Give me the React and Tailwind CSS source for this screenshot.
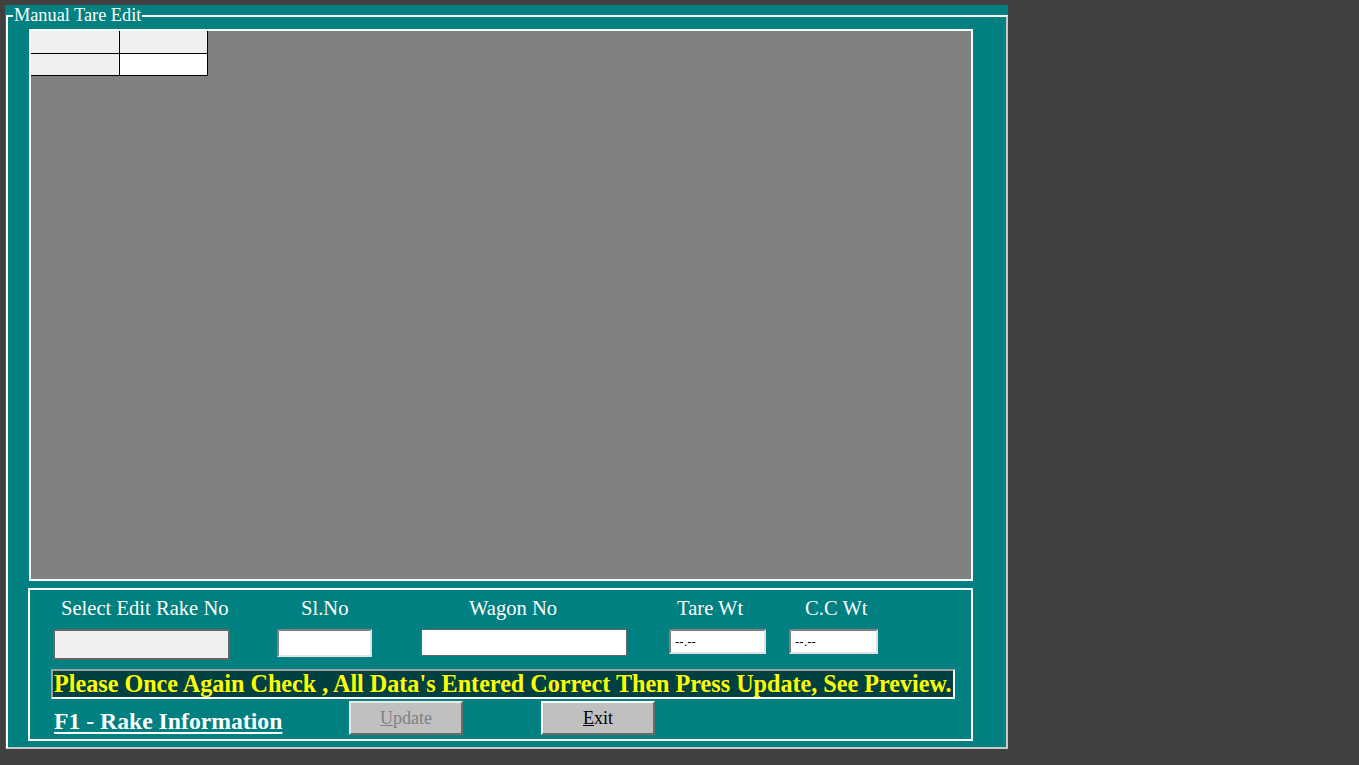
export default function App() {
  const serif = { fontFamily: '"Liberation Serif", "Times New Roman", serif' };
  return (
    <div className="w-[1359px] h-[765px] bg-[#404040] pt-[5px] pl-[5px] overflow-hidden" style={serif}>
      <div className="w-[1003px] h-[744px] bg-[#008080]">
        <fieldset className="ml-[1px] w-[1002px] h-[744px] border-t-2 border-l-2 border-white border-r-2 border-b-2 border-r-[#c8c8c8] border-b-[#c8c8c8] px-[5px] pt-[3px]">
          <legend className="px-[1px] text-[18.3px] leading-[21px] text-white">Manual Tare Edit</legend>
          <div className="ml-[15px]">
            {/* grid area */}
            <div className="ml-[1px] w-[944px] h-[552px] border-2 border-white bg-[#808080]">
              <div className="flex">
                <div className="w-[89px] h-[23px] bg-[#f0f0f0] border-r border-b border-black"></div>
                <div className="w-[88px] h-[23px] bg-[#f0f0f0] border-r border-b border-black"></div>
              </div>
              <div className="flex">
                <div className="w-[89px] h-[22px] bg-[#f0f0f0] border-r border-b border-black"></div>
                <div className="w-[88px] h-[22px] bg-white border-r border-b border-black"></div>
              </div>
            </div>
            {/* bottom panel */}
            <div className="mt-[7px] w-[945px] h-[153px] border-2 border-white">
              <div className="flex pt-[6px] text-[20.6px] leading-[24px] text-white whitespace-nowrap">
                <div className="ml-[31px] w-[240px]">Select Edit Rake No</div>
                <div className="w-[168px]">Sl.No</div>
                <div className="w-[208px]">Wagon No</div>
                <div className="w-[128px]">Tare Wt</div>
                <div>C.C Wt</div>
              </div>
              <div className="flex items-start mt-[9px]">
                <div className="ml-[23px] w-[177px] h-[31px] bg-[#f0f0f0] border-2 border-[#646464]"></div>
                <div className="ml-[47px] w-[95px] h-[28px] bg-white border-2 border-t-[#808080] border-l-[#808080] border-r-[#e3e3e3] border-b-[#e3e3e3]"></div>
                <div className="ml-[49px] w-[206px] h-[27px] bg-white border border-[#646464]"></div>
                <div className="ml-[42px] w-[97px] h-[25px] bg-white border-2 border-t-[#808080] border-l-[#808080] border-r-[#e3e3e3] border-b-[#e3e3e3] pl-[4px] text-[13px] leading-[21px] text-black" style={{ fontFamily: '"Liberation Sans", Arial, sans-serif' }}>--.--</div>
                <div className="ml-[23px] w-[89px] h-[25px] bg-white border-2 border-t-[#808080] border-l-[#808080] border-r-[#e3e3e3] border-b-[#e3e3e3] pl-[4px] text-[13px] leading-[21px] text-black" style={{ fontFamily: '"Liberation Sans", Arial, sans-serif' }}>--.--</div>
              </div>
              <div className="ml-[21px] mt-[9px] w-[904px] h-[30px] bg-[#004040] border-2 border-t-[#a0a0a0] border-l-[#a0a0a0] border-r-white border-b-white pl-[1px] overflow-hidden whitespace-nowrap text-[24.15px] leading-[26px] font-bold text-[#ffff00]">
                Please Once Again Check , All Data's Entered Correct Then Press Update, See Preview.
              </div>
              <div className="flex items-start mt-[2px]">
                <div className="ml-[24px] w-[295px] mt-[7px] text-[23.7px] leading-[26px] font-bold text-white whitespace-nowrap">
                  <span className="underline underline-offset-[3px] decoration-[2px]">F1 - Rake Information</span>
                </div>
                <button className="w-[114px] h-[34px] bg-[#c0c0c0] border-2 border-t-[#e8e8e8] border-l-[#e8e8e8] border-r-[#6a6a6a] border-b-[#6a6a6a] text-[18px] leading-[20px] text-[#808080]" style={serif}>
                  <span className="underline">U</span>pdate
                </button>
                <button className="ml-[78px] w-[114px] h-[34px] bg-[#c0c0c0] border-2 border-t-white border-l-white border-r-[#6a6a6a] border-b-[#6a6a6a] text-[18px] leading-[20px] text-black" style={serif}>
                  <span className="underline">E</span>xit
                </button>
              </div>
            </div>
          </div>
        </fieldset>
      </div>
    </div>
  );
}
